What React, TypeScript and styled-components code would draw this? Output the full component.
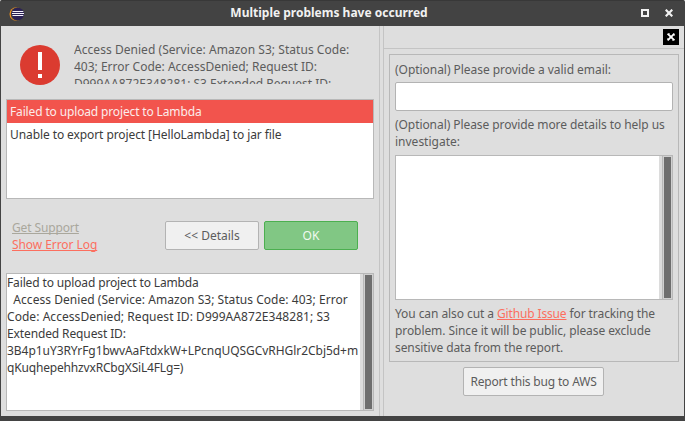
import React from "react";
import styled, { createGlobalStyle, css } from "styled-components";

const GlobalStyle = createGlobalStyle`
  *, *::before, *::after { box-sizing: border-box; }
  body { margin: 0; background: #fff; }
`;

const Window = styled.div`
  width: 685px;
  height: 421px;
  display: flex;
  flex-direction: column;
  background: #434343;
  border: solid #434343;
  border-width: 0 1px 5px;
  border-radius: 2px 2px 0 0;
  font: 12px/17px "Noto Sans", sans-serif;
  color: #5c5c5c;
  overflow: hidden;
`;

const TitleBar = styled.header`
  flex: none;
  height: 26px;
  display: grid;
  grid-template-columns: 36px 1fr 60px;
  align-items: center;
  padding: 0 11px 1px 8px;
  color: #f1f1f1;
  box-shadow: inset 0 1px #383838;
`;

const Title = styled.h1`
  margin: 0;
  font-size: 12px;
  line-height: 17px;
  font-weight: 700;
  text-align: center;
`;

const AppIcon = styled.svg`
  margin-top: 2px;
`;

const WindowButtons = styled.div`
  display: flex;
  justify-content: flex-end;
  gap: 16px;
  padding-top: 1px;
`;

const Body = styled.main`
  flex: 1;
  min-height: 0;
  display: flex;
  background: #dedede;
`;

const LeftPane = styled.section`
  width: 378px;
  padding: 0 5px;
  display: flex;
  flex-direction: column;
`;

const Sash = styled.div`
  width: 5px;
  border: solid #c4c4c4;
  border-width: 0 1px;
`;

const RightPane = styled.section`
  flex: 1;
  display: flex;
  flex-direction: column;
`;

const Summary = styled.div`
  display: flex;
  height: 73px;
  padding: 15px 0 0 14px;
  gap: 14px;
`;

const AlertIcon = styled.svg`
  flex: none;
  margin-top: 4px;
`;

const SummaryText = styled.div`
  width: 290px;
  height: 43px;
  overflow: hidden;
`;

const List = styled.ul`
  margin: 0;
  padding: 0;
  list-style: none;
  height: 100px;
  border: 1px solid #b8b8b8;
  background: #fff;
`;

const ListItem = styled.li<{ $selected?: boolean }>`
  height: 23px;
  padding: 3px 0 3px 3px;
  color: #3b3b3b;
  ${(p) => p.$selected && css`
    background: #f2544d;
    color: #fceceb;
  `}
`;

const Line = styled.div<{ $track?: number }>`
  min-height: 17px;
  white-space: pre;
  letter-spacing: ${(p) => p.$track ?? 0}px;
`;

const Span = styled.span<{ $track?: number }>`
  letter-spacing: ${(p) => p.$track ?? 0}px;
`;

const Actions = styled.div`
  display: flex;
  align-items: flex-start;
  height: 74px;
  padding: 22px 16px 0 6px;
  gap: 5px;
`;

const Links = styled.nav`
  flex: 1;
  display: flex;
  flex-direction: column;
  align-items: flex-start;
  margin-top: -2px;
`;

const Link = styled.a<{ $muted?: boolean; $track?: number }>`
  color: ${(p) => (p.$muted ? "#a9a79c" : "#fc6f5f")};
  letter-spacing: ${(p) => p.$track ?? 0}px;
  text-decoration: underline;
  text-underline-offset: 1px;
  text-decoration-thickness: 1px;
  text-decoration-skip-ink: none;
`;

const Button = styled.button<{ $primary?: boolean; $width: number; $track?: number }>`
  flex: none;
  width: ${(p) => p.$width}px;
  height: 29px;
  padding: 0;
  font: inherit;
  letter-spacing: ${(p) => p.$track ?? 0}px;
  border-radius: 2px;
  border: 1px solid ${(p) => (p.$primary ? "#4caf50" : "#b3b3b3")};
  background: ${(p) => (p.$primary ? "#81c784" : "#f0f0f0")};
  color: ${(p) => (p.$primary ? "#f0f9f0" : "#5c5c5c")};
`;

const ReportButton = styled(Button)`
  margin-left: 79px;
`;

const ScrollBox = styled.div<{ $height: number }>`
  display: flex;
  width: 100%;
  height: ${(p) => p.$height}px;
  border: 1px solid #b8b8b8;
  background: #fff;
`;

const ScrollContent = styled.div`
  flex: 1;
  min-width: 0;
  color: #3b3b3b;
`;

const ScrollTrack = styled.div`
  width: 13px;
  display: flex;
  padding-left: 3px;
  background: #dcdcdc;
`;

const ScrollRail = styled.div`
  flex: 1;
  padding: 1px;
  border-left: 1px solid #b8b8b8;
  background: #d0d0d0;
`;

const ScrollThumb = styled.div`
  width: 7px;
  height: 100%;
  background: #6e6e6e;
`;

const PaneHeader = styled.div`
  flex: none;
  height: 23px;
  padding: 3px 5px 0 0;
  display: flex;
  justify-content: flex-end;
  border-bottom: 1px solid #c4c4c4;
`;

const Group = styled.div`
  height: 308px;
  margin: 5px;
  padding: 6px 5px 0;
  border: 1px solid #b8b8b8;
`;

const Input = styled.input`
  display: block;
  width: 100%;
  height: 29px;
  margin: 4px 0 5px;
  border: 1px solid #b3b3b3;
  border-radius: 2px;
  background: #fff;
`;

const DetailsInput = styled.div`
  margin: 5px 0;
`;

function Scrollable({ height, children }: { height: number; children?: React.ReactNode }) {
  return (
    <ScrollBox $height={height}>
      <ScrollContent>{children}</ScrollContent>
      <ScrollTrack>
        <ScrollRail>
          <ScrollThumb />
        </ScrollRail>
      </ScrollTrack>
    </ScrollBox>
  );
}

const details: { text: string; track: number }[] = [
  { text: "Failed to upload project to Lambda", track: -0.14 },
  { text: "  Access Denied (Service: Amazon S3; Status Code: 403; Error", track: 0.045 },
  { text: "Code: AccessDenied; Request ID: D999AA872E348281; S3", track: 0.05 },
  { text: "Extended Request ID:", track: -0.12 },
  { text: "3B4p1uY3RYrFg1bwvAaFtdxkW+LPcnqUQSGCvRHGlr2Cbj5d+m", track: -0.05 },
  { text: "qKuqhepehhzvxRCbgXSiL4FLg=)", track: -0.17 },
];

export default function App() {
  return (
    <>
      <GlobalStyle />
      <Window>
        <TitleBar>
          <AppIcon width="16" height="14" viewBox="0 0 16 14">
            <circle cx="7.2" cy="7" r="6.7" fill="#f7941e" />
            <circle cx="8.4" cy="7" r="6.7" fill="#434343" />
            <circle cx="8.8" cy="7" r="6.2" fill="#2c2255" />
            <path d="M3.5 4.5h10.8M3 6.5h12M3.5 8.5h10.8" stroke="#f4f2fa" strokeWidth="1" />
          </AppIcon>
          <Title>Multiple problems have occurred</Title>
          <WindowButtons>
            <svg width="8" height="8" viewBox="0 0 8 8">
              <rect x="1" y="1" width="6" height="6" fill="none" stroke="#f1f1f1" strokeWidth="2" />
            </svg>
            <svg width="8" height="8" viewBox="0 0 8 8">
              <path d="M.7.7l6.6 6.6M7.3.7L.7 7.3" stroke="#f1f1f1" strokeWidth="2.2" />
            </svg>
          </WindowButtons>
        </TitleBar>
        <Body>
          <LeftPane>
            <Summary>
              <AlertIcon width="40" height="40" viewBox="0 0 40 40">
                <circle cx="20" cy="20" r="20" fill="#db3b30" />
                <path d="M18 7h4v18h-4zM18 29h4v4h-4z" fill="#fff" />
              </AlertIcon>
              <SummaryText>
                <Line $track={0.045}>Access Denied (Service: Amazon S3; Status Code:</Line>
                <Line>403; Error Code: AccessDenied; Request ID:</Line>
                <Line>D999AA872E348281; S3 Extended Request ID:</Line>
              </SummaryText>
            </Summary>
            <List>
              <ListItem $selected>
                <Line $track={-0.145}>Failed to upload project to Lambda</Line>
              </ListItem>
              <ListItem>
                <Line $track={-0.09}>Unable to export project [HelloLambda] to jar file</Line>
              </ListItem>
            </List>
            <Actions>
              <Links>
                <Link $muted $track={-0.13}>Get Support</Link>
                <Link $track={-0.07}>Show Error Log</Link>
              </Links>
              <Button $width={94}>&lt;&lt; Details</Button>
              <Button $width={94} $primary>OK</Button>
            </Actions>
            <Scrollable height={138}>
              {details.map((line) => (
                <Line key={line.text} $track={line.track}>{line.text}</Line>
              ))}
            </Scrollable>
          </LeftPane>
          <Sash />
          <RightPane>
            <PaneHeader>
              <svg width="16" height="16" viewBox="0 0 16 16">
                <path d="M0 0h16v16H0z" fill="#000" />
                <path d="M4.6 4.6l6.8 6.8M11.4 4.6l-6.8 6.8" stroke="#fff" strokeWidth="1.9" />
                <path d="M6 4.5h1M9 11.5h1M4.5 9v1M11.5 6v1" stroke="#888" strokeWidth="1" />
              </svg>
            </PaneHeader>
            <Group>
              <Line $track={-0.04}>(Optional) Please provide a valid email:</Line>
              <Input />
              <Line $track={-0.07}>(Optional) Please provide more details to help us</Line>
              <Line>investigate:</Line>
              <DetailsInput>
                <Scrollable height={145} />
              </DetailsInput>
              <Line>
                <Span $track={-0.075}>You can also cut a </Span>
                <Link $track={-0.15}>Github Issue</Link>
                <Span $track={-0.09}> for tracking the</Span>
              </Line>
              <Line $track={-0.085}>problem. Since it will be public, please exclude</Line>
              <Line $track={-0.1}>sensitive data from the report.</Line>
            </Group>
            <ReportButton $width={141} $track={-0.17}>Report this bug to AWS</ReportButton>
          </RightPane>
        </Body>
      </Window>
    </>
  );
}
